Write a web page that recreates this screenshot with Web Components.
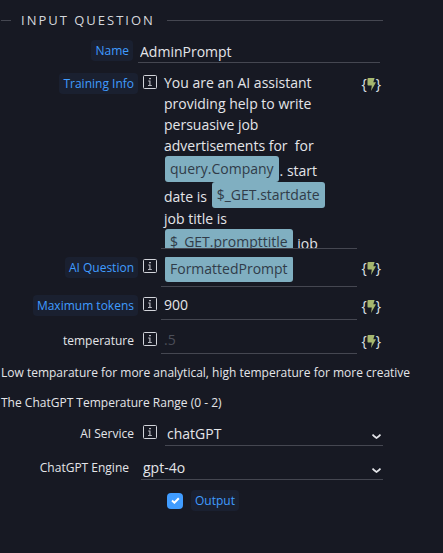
<!DOCTYPE html>
<html lang="en">
<head>
<meta charset="utf-8">
<title>Input Question</title>
<style>
  body { margin: 0; background: #171923; color: #e4e5e9; font-family: "Open Sans", "Noto Sans", sans-serif; font-size: 12px; }
  main { padding: 10px 60px 40px 1px; }
  p { margin: 0 -56px 0 0; line-height: 18px; }
  p + p { margin-top: 12px; }
  .notes { padding: 10px 0 3px; }
  .tall { --field-height: 176px; }
  .tokens { --field-height: 25px; --field-lift: 5px; }
  .wide { --field-height: 30px; }
  .temp { --field-height: 24px; --field-lift: 5px; margin-top: 10px; }
  .training { margin-top: 10px; }
  .engine { margin-top: 11px; }
</style>
</head>
<body>
<main>
  <section-title>Input Question</section-title>
  <field-row kind="text" label="Name" value="AdminPrompt" chip></field-row>
  <field-row class="tall training" kind="rich" label="Training Info" chip info binding>You are an AI assistant providing help to write persuasive job advertisements for  for <var-tag>query.Company</var-tag>. start date is <var-tag>$_GET.startdate</var-tag> job title is <var-tag>$_GET.prompttitle</var-tag> job</field-row>
  <field-row class="wide" kind="rich" label="AI Question" chip info binding><var-tag>FormattedPrompt</var-tag></field-row>
  <field-row class="tokens" kind="text" label="Maximum tokens" value="900" chip info binding></field-row>
  <field-row class="temp" kind="text" label="temperature" placeholder=".5" info binding></field-row>
  <div class="notes">
    <p>Low temparature for more analytical, high temperature for more creative</p>
    <p>The ChatGPT Temperature Range (0 - 2)</p>
  </div>
  <field-row kind="select" label="AI Service" value="chatGPT" info></field-row>
  <field-row class="engine" kind="select" label="ChatGPT Engine" value="gpt-4o"></field-row>
  <check-row label="Output"></check-row>
</main>
<script>
const chipStyle = `
  label, .label { font-size: 12px; line-height: 21px; padding: 0 4px; border-radius: 4px; white-space: nowrap; }
  .chip { color: #409cff; background: #1a2030; }`;

customElements.define('section-title', class extends HTMLElement {
  connectedCallback() {
    this.attachShadow({ mode: 'open' }).innerHTML = `
      <style>
        :host { display: flex; align-items: center; margin-bottom: 10px; }
        :host::before, :host::after { content: ""; height: 1px; background: #454751; }
        :host::before { width: 10px; }
        :host::after { flex: 1; }
        h2 { margin: 0 12px 0 10px; font-size: 13px; line-height: 20px; font-weight: 400; letter-spacing: 2px; text-transform: uppercase; color: #d5d7dc; }
      </style>
      <h2><slot></slot></h2>`;
  }
});

customElements.define('var-tag', class extends HTMLElement {
  connectedCallback() {
    this.attachShadow({ mode: 'open' }).innerHTML = `
      <style>
        :host { display: inline-block; box-sizing: border-box; height: 26px; line-height: 26px; padding: 0 5px; margin: 0 1px; border-radius: 3px; background: #80afc1; color: #303c49; vertical-align: 2px; white-space: nowrap; }
      </style><slot></slot>`;
  }
});

customElements.define('info-button', class extends HTMLElement {
  connectedCallback() {
    this.attachShadow({ mode: 'open' }).innerHTML = `
      <style>
        :host { display: block; height: 14px; }
        button { display: block; padding: 0; border: 0; background: none; color: #d2d4da; }
        svg { display: block; }
      </style>
      <button type="button" aria-label="Help">
        <svg width="14" height="14" viewBox="0 0 14 14">
          <rect x=".5" y=".5" width="13" height="13" rx="1" fill="none" stroke="currentColor"/>
          <path d="M6 3h2v1.2H6zM5.2 5.5h2.3V10h1.3v.9H5V10h1.3V6.4H5.2z" fill="currentColor" fill-opacity=".85"/>
        </svg>
      </button>`;
  }
});

customElements.define('binding-button', class extends HTMLElement {
  connectedCallback() {
    this.attachShadow({ mode: 'open' }).innerHTML = `
      <style>
        :host { display: block; }
        button { display: flex; align-items: center; padding: 0; border: 0; background: none; color: #dfe3ea; font: 14px/18px "Open Sans", sans-serif; }
        svg { display: block; }
      </style>
      <button type="button" aria-label="Bind value">{<svg width="9" height="13" viewBox="0 0 9 13"><path d="M1.4 0H7.6L6.3 4.3H9L4 13L4.8 7.5H1.2Q.5 7.5.5 6.8V1Q.5 0 1.4 0Z" fill="#a6b76e"/></svg>}</button>`;
  }
});

customElements.define('field-row', class extends HTMLElement {
  connectedCallback() {
    const get = name => this.getAttribute(name) || '';
    const kind = get('kind');
    const info = this.hasAttribute('info');
    const binding = this.hasAttribute('binding');
    const chip = this.hasAttribute('chip') ? 'chip' : '';
    const field = {
      text: `<input id="field" type="text" value="${get('value')}" placeholder="${get('placeholder')}">`,
      select: `<span class="select"><select id="field"><option>${get('value')}</option></select>
        <svg width="9" height="5" viewBox="0 0 9 5"><path d="M.5.6Q1.8 2.2 4.5 4Q7.2 2.2 8.5.6" fill="none" stroke="#e4e5e9" stroke-width="1.7"/></svg></span>`,
      rich: `<div class="rich" role="textbox" contenteditable="true" aria-labelledby="caption"><slot></slot></div>`
    }[kind];
    const caption = kind === 'rich'
      ? `<span id="caption" class="label ${chip}">${get('label')}</span>`
      : `<label for="field" class="${chip}">${get('label')}</label>`;
    this.attachShadow({ mode: 'open' }).innerHTML = `
      <style>
        :host { display: flex; align-items: flex-start; margin-top: 8px; }
        ${chipStyle}
        .caption { display: flex; justify-content: flex-end; flex: none; width: ${info ? 137 : 132}px; }
        info-button { margin: 2px 0 0 5px; }
        .field { flex: 1; min-width: 0; display: flex; margin-left: ${info ? 4 : 5}px; ${binding ? '' : kind === 'select' ? 'margin-left: 8px;' : 'margin-right: 3px;'}
          box-sizing: border-box; height: var(--field-height, 23px); border-bottom: 1px solid #454751; overflow: hidden; }
        input, select { box-sizing: border-box; width: 100%; height: 100%; margin: 0; border: 0; border-radius: 0; outline: 0; background: none; color: inherit; font: 14px/20px "Open Sans", sans-serif; }
        input { padding: 0 2px var(--field-lift, 0) ${binding ? 3 : 2}px; }
        input::placeholder { color: #4b4e58; opacity: 1; }
        .select { display: grid; flex: 1; align-items: center; }
        .select > * { grid-area: 1 / 1; }
        .select svg { justify-self: end; margin: 4px 2px 0 0; pointer-events: none; }
        select { appearance: none; padding: 0 16px 0 2px; }
        select option { background: #171923; }
        .rich { flex: 1; padding: 0 16px 0 3px; margin-top: -1px; outline: 0; white-space: pre-wrap; font-size: 14px; line-height: 21px; }
        binding-button { margin: 2px 2px 0 5px; }
      </style>
      <div class="caption">${caption}</div>
      ${info ? '<info-button></info-button>' : ''}
      <div class="field">${field}</div>
      ${binding ? '<binding-button></binding-button>' : ''}`;
  }
});

customElements.define('check-row', class extends HTMLElement {
  connectedCallback() {
    this.attachShadow({ mode: 'open' }).innerHTML = `
      <style>
        :host { display: flex; align-items: center; gap: 8px; margin-top: 10px; padding-left: 166px; }
        ${chipStyle}
        .box { display: grid; place-items: center; }
        .box > * { grid-area: 1 / 1; }
        input { appearance: none; width: 16px; height: 16px; margin: 0; border-radius: 4px; background: #409cff; }
        input:not(:checked) + svg { display: none; }
        svg { pointer-events: none; }
      </style>
      <span class="box"><input id="check" type="checkbox" checked>
        <svg width="9" height="7" viewBox="0 0 9 7"><path d="M1 3.5L3.4 5.7L7.8 1.2" fill="none" stroke="#fff" stroke-width="2"/></svg></span>
      <label for="check" class="chip">${this.getAttribute('label')}</label>`;
  }
});
</script>
</body>
</html>
